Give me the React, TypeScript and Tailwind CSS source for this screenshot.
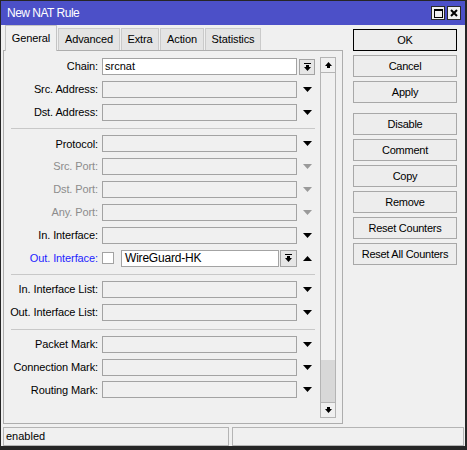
import React from 'react';

const font = { fontFamily: '"Liberation Sans", Arial, sans-serif' };

type Row = {
  label: string;
  tone?: 'normal' | 'disabled' | 'blue';
  kind?: 'chain' | 'plain' | 'out';
};

const sections: Row[][] = [
  [
    { label: 'Chain:', kind: 'chain' },
    { label: 'Src. Address:' },
    { label: 'Dst. Address:' },
  ],
  [
    { label: 'Protocol:' },
    { label: 'Src. Port:', tone: 'disabled' },
    { label: 'Dst. Port:', tone: 'disabled' },
    { label: 'Any. Port:', tone: 'disabled' },
    { label: 'In. Interface:' },
    { label: 'Out. Interface:', tone: 'blue', kind: 'out' },
  ],
  [
    { label: 'In. Interface List:' },
    { label: 'Out. Interface List:' },
  ],
  [
    { label: 'Packet Mark:' },
    { label: 'Connection Mark:' },
    { label: 'Routing Mark:' },
  ],
];

const buttons = ['OK', 'Cancel', 'Apply', 'Disable', 'Comment', 'Copy', 'Remove', 'Reset Counters', 'Reset All Counters'];

const tabs = [
  { name: 'Advanced', w: 'w-[62px]' },
  { name: 'Extra', w: 'w-[38px]' },
  { name: 'Action', w: 'w-[44px]' },
  { name: 'Statistics', w: 'w-[56px]' },
];

const DownTri = ({ gray }: { gray?: boolean }) => (
  <svg width="9" height="5" viewBox="0 0 9 5">
    <polygon points="0,0 9,0 4.5,5" fill={gray ? '#9a9a9a' : '#000'} />
  </svg>
);

const UpTri = () => (
  <svg width="9" height="5" viewBox="0 0 9 5">
    <polygon points="0,5 9,5 4.5,0" fill="#000" />
  </svg>
);

// bar over a down arrow
const DropIcon = () => (
  <svg width="7" height="8" viewBox="0 0 7 8">
    <rect x="0" y="0" width="7" height="1" fill="#000" />
    <rect x="2" y="2" width="3" height="2" fill="#000" />
    <polygon points="0,4 7,4 3.5,8" fill="#000" />
  </svg>
);

const ScrollArrow = ({ up }: { up?: boolean }) => (
  <svg width="7" height="6" viewBox="0 0 7 6" className={up ? '' : 'rotate-180'}>
    <polygon points="3.5,0 7,4 0,4" fill="#000" />
    <rect x="2" y="4" width="3" height="2" fill="#000" />
  </svg>
);

const FieldRow = ({ row }: { row: Row }) => {
  const color =
    row.tone === 'disabled' ? 'text-[#8c8c8c]' : row.tone === 'blue' ? 'text-[#1e1eff]' : 'text-black';
  return (
    <div className="flex items-center h-[17px]">
      <div className={`w-[94px] shrink-0 text-right text-[11px] tracking-[-0.1px] whitespace-nowrap ${color}`}>
        {row.label}
      </div>
      {row.kind === 'chain' && (
        <>
          <div className="ml-[4px] w-[195px] h-[17px] border border-[#a3a3a3] bg-white flex items-center pl-[2px] text-[11px]">
            srcnat
          </div>
          <div className="ml-[2px] w-[16px] h-[16px] border border-[#a3a3a3] bg-[#e6e6e6] flex items-center justify-center">
            <DropIcon />
          </div>
        </>
      )}
      {row.kind === 'out' && (
        <>
          <div className="ml-[4px] w-[12px] h-[12px] border border-[#a3a3a3] bg-white" />
          <div className="ml-[7px] w-[158px] h-[17px] border border-[#a3a3a3] bg-white flex items-center pl-[3px] text-[12px] tracking-[-0.2px]">
            WireGuard-HK
          </div>
          <div className="ml-[1px] w-[17px] h-[17px] border border-[#a3a3a3] bg-[#e6e6e6] flex items-center justify-center">
            <DropIcon />
          </div>
          <div className="w-[20px] flex justify-center">
            <UpTri />
          </div>
        </>
      )}
      {(row.kind === undefined || row.kind === 'plain') && (
        <>
          <div className="ml-[4px] w-[195px] h-[17px] border border-[#a3a3a3] bg-[#f0f0f0]" />
          <div className="w-[20px] flex justify-center">
            <DownTri gray={row.tone === 'disabled'} />
          </div>
        </>
      )}
    </div>
  );
};

export default function App() {
  return (
    <div className="w-[467px] h-[450px] flex flex-col border-t border-l border-r-2 border-b-4 border-[#262626] bg-[#4c50c8]" style={font}>
      {/* title bar */}
      <div className="h-[24px] flex items-center pl-[6px] pr-[4px]">
        <span className="text-white text-[12px] tracking-[-0.5px]">New NAT Rule</span>
        <div className="ml-auto flex gap-[2px]">
          <div className="w-[14px] h-[14px] border border-[#2a2a2a] bg-[#f0f0f0] flex items-center justify-center">
            <div className="w-[9px] h-[9px] border border-black border-t-2" />
          </div>
          <div className="w-[14px] h-[14px] border border-[#2a2a2a] bg-[#f0f0f0] flex items-center justify-center">
            <svg width="8" height="8" viewBox="0 0 8 8">
              <path d="M1 1 L7 7 M7 1 L1 7" stroke="#000" strokeWidth="2" />
            </svg>
          </div>
        </div>
      </div>

      {/* body */}
      <div className="flex-1 bg-[#f0f0f0] flex flex-col">
        <div className="flex pl-[2px]">
          <div className="w-[340px] flex flex-col">
            <div className="h-[25px] flex items-end pl-[2px] text-[11px] tracking-[-0.1px]">
              <div className="relative z-10 -mb-px h-[26px] w-[52px] bg-[#f0f0f0] border border-b-0 border-[#c4c4c4] flex items-center justify-center">
                General
              </div>
              {tabs.map(t => (
                <div key={t.name} className={`${t.w} h-[22px] ml-[1px] bg-[#e4e4e4] border border-b-0 border-[#cacaca] flex items-center justify-center`}>
                  {t.name}
                </div>
              ))}
            </div>
            <div className="h-[374px] border border-[#adadad] flex">
              <div className="w-[313px] pt-[7px] flex flex-col">
                {sections.map((sec, i) => (
                  <div key={i}>
                    {i > 0 && (
                      <div className="pt-[7.5px] pb-[6px] pl-[7px] pr-[2px]">
                        <div className="h-px bg-[#c8c8c8]" />
                      </div>
                    )}
                    <div className="flex flex-col gap-[5.9px]">
                      {sec.map(r => (
                        <FieldRow key={r.label} row={r} />
                      ))}
                    </div>
                  </div>
                ))}
              </div>
              <div className="ml-[3px] mt-[6px] mb-[5px] w-[16px] border border-[#b4b4b4] flex flex-col">
                <div className="h-[15px] border-b border-[#b4b4b4] flex items-center justify-center">
                  <ScrollArrow up />
                </div>
                <div className="flex-1 bg-[#f0f0f0]" />
                <div className="h-[42px] bg-[#d8d8d8]" />
                <div className="h-[15px] border-t border-[#b4b4b4] flex items-center justify-center">
                  <ScrollArrow />
                </div>
              </div>
            </div>
          </div>

          <div className="ml-[10px] w-[104px] pt-[4px] flex flex-col gap-[4px] text-[11px] tracking-[-0.25px]">
            {buttons.map((b, i) => (
              <div
                key={b}
                className={`h-[22px] flex items-center justify-center bg-[#ededed] border ${
                  i === 0 ? 'border-black' : 'border-[#a8a8a8]'
                } ${i === 3 ? 'mt-[6px]' : ''}`}
              >
                {b}
              </div>
            ))}
          </div>
        </div>

        <div className="mt-[3px] h-[19px] flex gap-[3px] pl-[2px] pr-[1px] text-[11px]">
          <div className="w-[226px] border border-[#b4b4b4] flex items-center pl-[2px]">enabled</div>
          <div className="flex-1 border border-[#b4b4b4]" />
        </div>
      </div>
    </div>
  );
}
